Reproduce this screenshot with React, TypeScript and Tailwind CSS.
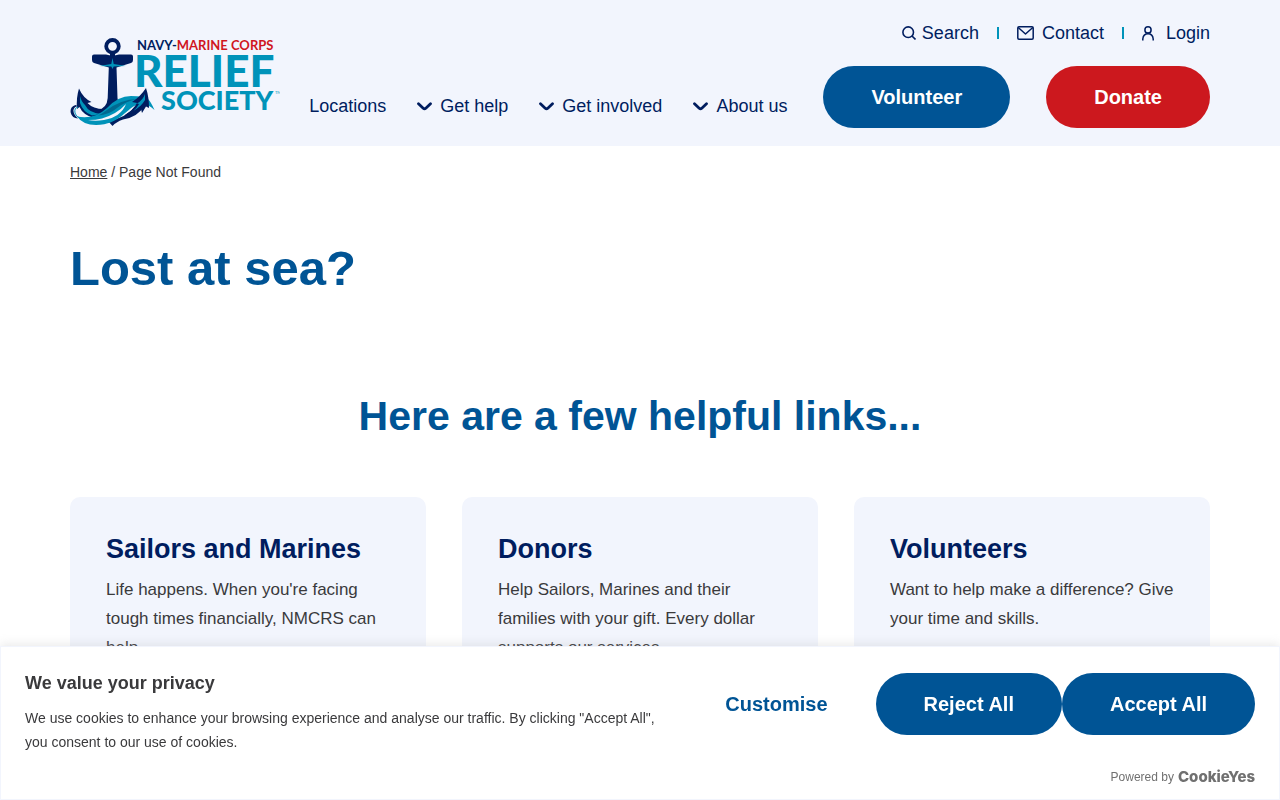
import type { ReactNode } from 'react';

const menu = [
  { label: 'Locations', hasSubmenu: false },
  { label: 'Get help', hasSubmenu: true },
  { label: 'Get involved', hasSubmenu: true },
  { label: 'About us', hasSubmenu: true },
];

const cards = [
  {
    title: 'Sailors and Marines',
    text: "Life happens. When you're facing tough times financially, NMCRS can help.",
  },
  {
    title: 'Donors',
    text: 'Help Sailors, Marines and their families with your gift. Every dollar supports our services.',
  },
  {
    title: 'Volunteers',
    text: 'Want to help make a difference? Give your time and skills.',
  },
];

const Logo = () => (
  <svg width="210" height="88" viewBox="0 0 210 88" role="img" aria-label="Navy-Marine Corps Relief Society">
    {/* Anchor ring, crossbar and stem */}
    <circle cx="42.5" cy="8.3" r="6.3" fill="none" stroke="#001d5f" strokeWidth="3.8" />
    <path d="M40 14.500h5v4h-5z" fill="#001d5f" />
    <path
      d="M24 16.500H36Q42.500 18.500 49 16.500H61Q63 16.500 63 18.500V22Q63 24.500 61 25L46.500 29.500 47.500 60Q48 66 52 68L40 76 28 72Q37 70 37.700 60L38.800 29.500 24 25Q22 24.500 22 22V18.500Q22 16.500 24 16.500Z"
      fill="#001d5f"
    />
    <path d="M42.500 20L43.700 26 56 28 43.700 28.500 42.500 31 41.300 28.500 29 28 41.300 26Z" fill="#0093b9" />
    {/* Arms */}
    <path d="M9 50.500Q13 60 21.500 64L17.500 65Q23 71 34 71L42 78 24 80Q13 77 9.500 69L7 71Q6 60 9 50.500Z" fill="#001d5f" />
    <path d="M10 58Q11.500 64 15 67Q19 75 31 76L22 77.500Q13 74 10 65Z" fill="#0093b9" />
    <path d="M38 83Q56 80 67 67L74 68Q68 79 53 81.500Q46 84 42.500 88Z" fill="#001d5f" />
    {/* Wave */}
    <path d="M5.500 67Q-0.500 69 0.800 75Q2 80 8 80.500Q3 76 3.500 72Q4 69 7.500 68Z" fill="#001d5f" />
    <path d="M8 69Q4 70 5 75Q6 79 10 80" fill="none" stroke="#0093b9" strokeWidth="1" />
    <path
      d="M7 78.500Q24 82 37 70Q48 58 61 58Q74 58 78 61Q81 64 84.500 72Q78 65 69 66C57 69 50 87 26 87Q13 87 7 78.500Z"
      fill="#0093b9"
    />
    <path d="M34 74Q50 61 68 61Q56 63 47 70Q39 77 28 77.500Q31 76.500 34 74Z" fill="#006990" />
    <path d="M32 80.500Q47 76 56 66Q51 79 34 82Q25 83.500 18 82Q26 82 32 80.500Z" fill="#f2f5fd" />
    <path d="M76 50Q70 59 62 64L67 65Q63 72 55 77Q66 75 71 71L72 75 76 68.500 79 70Q79 59 76 50Z" fill="#001d5f" />
    <path d="M75 56Q73 62 67 65.500L69 66Q67 70 63 73Q71 69 75 62Z" fill="#0093b9" />
    <g fontFamily="Lato, sans-serif">
      <text x="67" y="12" fontSize="13" fontWeight="700" fill="#001d5f">
        NAVY-<tspan fill="#d0161f">MARINE CORPS</tspan>
      </text>
      <text x="64" y="49" fontSize="44" fontWeight="900" fill="#0093b9">RELIEF</text>
      <text x="91" y="72" fontSize="27" fontWeight="900" fill="#0093b9">SOCIETY</text>
      <text x="205" y="56" fontSize="4" fill="#0093b9">TM</text>
    </g>
  </svg>
);

const Chevron = () => (
  <svg width="15" height="9" viewBox="0 0 15 9" fill="none" stroke="#001d5f" strokeWidth="2.800" strokeLinecap="round" strokeLinejoin="round">
    <path d="M1.500 1.800L6.200 6.200Q7.500 7.300 8.800 6.200L13.500 1.800" />
  </svg>
);

const SearchIcon = () => (
  <svg width="14" height="14" viewBox="0 0 14 14" fill="none" stroke="#001d5f" strokeWidth="1.6">
    <circle cx="6.200" cy="6.200" r="5.300" />
    <path d="M10 10L13.500 13.500" />
  </svg>
);

const MailIcon = () => (
  <svg width="17" height="14" viewBox="0 0 17 14" fill="none" stroke="#001d5f" strokeWidth="1.5" strokeLinejoin="round">
    <rect x="0.800" y="0.800" width="15.400" height="12.400" rx="1.200" />
    <path d="M1.200 1.500L8.500 8 15.800 1.500" />
  </svg>
);

const UserIcon = () => (
  <svg width="12" height="15" viewBox="0 0 12 15" fill="none" stroke="#001d5f" strokeWidth="1.5">
    <circle cx="6" cy="3.900" r="3.100" />
    <path d="M0.800 14.500V13Q1.300 7.800 6 7.800T11.200 13V14.500" />
  </svg>
);

const Divider = () => <span className="w-0.5 h-3 bg-[#0093b9]" />;

const PillLink = ({ children, className }: { children: ReactNode; className: string }) => (
  <a href="#" className={`rounded-full px-12 py-4 text-xl leading-[30px] font-bold text-white ${className}`}>
    {children}
  </a>
);

const Header = () => (
  <header className="bg-[#f2f5fd] text-[#001d5f]">
    <div className="max-w-[1140px] mx-auto flex justify-between pb-[18px] text-lg leading-6">
      <a href="#" className="pt-[38px] shrink-0">
        <Logo />
      </a>
      <div className="flex flex-col items-end pt-[21px]">
        <div className="flex items-center gap-[18px]">
          <a href="#" className="flex items-center gap-1.5">
            <SearchIcon />
            Search
          </a>
          <Divider />
          <a href="#" className="flex items-center gap-2">
            <MailIcon />
            Contact
          </a>
          <Divider />
          <a href="#" className="flex items-center gap-3">
            <UserIcon />
            Login
          </a>
        </div>
        <div className="flex items-center gap-9 mt-[21px]">
          <nav className="flex gap-[31px] pt-[18px]">
            {menu.map((item) => (
              <a key={item.label} href="#" className="flex items-center gap-2">
                {item.hasSubmenu && <Chevron />}
                {item.label}
              </a>
            ))}
          </nav>
          <PillLink className="bg-[#005495]">Volunteer</PillLink>
          <PillLink className="bg-[#cc181e]">Donate</PillLink>
        </div>
      </div>
    </div>
  </header>
);

const CookieBanner = () => (
  <section
    aria-label="We value your privacy"
    className="fixed inset-x-0 bottom-0 bg-white border border-[#f2f5fd] px-6 pt-[26px] pb-2.5 shadow-[0_-1px_10px_0_rgba(172,171,171,0.3)]"
  >
    <div className="flex justify-between">
      <div className="flex-1">
        <h2 className="text-lg leading-5 font-bold mb-[13px]">We value your privacy</h2>
        <p className="text-sm leading-6">
          We use cookies to enhance your browsing experience and analyse our traffic. By clicking "Accept All", you consent to our use of cookies.
        </p>
      </div>
      <div className="flex items-start text-xl leading-[30px] font-bold">
        <button className="px-12 py-4 text-[#005495]">Customise</button>
        <button className="rounded-full px-12 py-4 bg-[#005495] text-white">Reject All</button>
        <button className="rounded-full px-12 py-4 bg-[#005495] text-white">Accept All</button>
      </div>
    </div>
    <div className="flex items-center justify-end gap-1 mt-[11px] text-xs leading-6 text-[#707070]">
      Powered by
      <a href="#" className="font-['Inter'] text-[15px] font-extrabold">CookieYes</a>
    </div>
  </section>
);

export default function App() {
  return (
    <div className="min-h-screen bg-white font-['Liberation_Sans',Arial,sans-serif] text-[#3a3a3c]">
      <Header />
      <main className="max-w-[1140px] mx-auto pt-4">
        <nav aria-label="Breadcrumb" className="text-sm leading-5">
          <a href="#" className="underline">Home</a> / Page Not Found
        </nav>
        <h1 className="mt-14 text-[49px] leading-[60px] font-bold text-[#005495]">Lost at sea?</h1>
        <h2 className="mt-[93px] text-[41px] leading-[50px] font-bold text-center text-[#005495]">
          Here are a few helpful links...
        </h2>
        <div className="grid grid-cols-3 gap-9 mt-14">
          {cards.map((card) => (
            <article key={card.title} className="rounded-[10px] bg-[#f2f5fd] p-9">
              <h3 className="text-[27px] leading-8 font-bold text-[#001d5f] mb-2.5">{card.title}</h3>
              <p className="text-[17px] leading-[29px]">{card.text}</p>
            </article>
          ))}
        </div>
      </main>
      <CookieBanner />
    </div>
  );
}
